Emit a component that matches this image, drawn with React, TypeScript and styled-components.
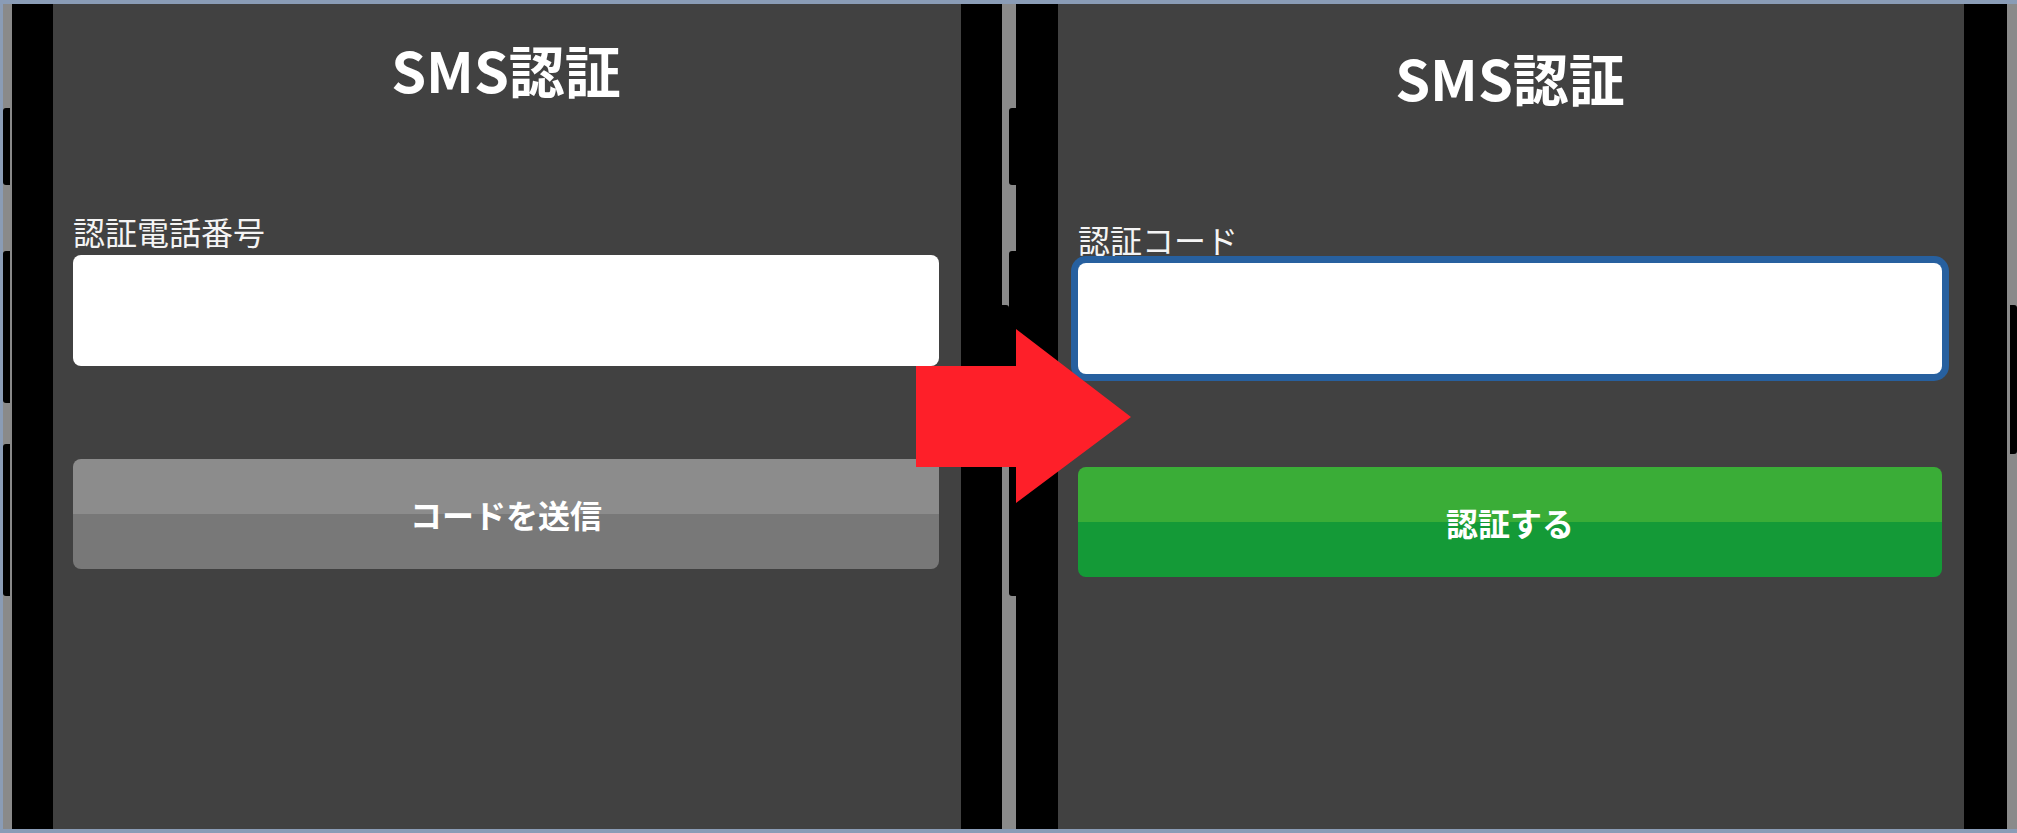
import React from 'react';
import styled, {createGlobalStyle} from 'styled-components';

const GlobalStyle = createGlobalStyle`
  html, body {
    margin: 0;
    padding: 0;
  }
  body {
    background: #8a9cb6;
    font-family: 'Noto Sans CJK JP', 'Noto Sans', sans-serif;
  }
`;

const Page = styled.div`
  position: relative;
  width: 2017px;
  height: 833px;
  box-sizing: border-box;
  padding: 4px 0 4px 3px;
  display: flex;
  background: #8a9cb6;
  overflow: hidden;
`;

const Phone = styled.div<{$width: number}>`
  position: relative;
  flex: none;
  width: ${(p) => p.$width}px;
  height: 100%;
  display: flex;
`;

const Edge = styled.div<{$width: number}>`
  flex: none;
  width: ${(p) => p.$width}px;
  background: #8a8a8a;
`;

const Bezel = styled.div<{$width: number}>`
  flex: none;
  width: ${(p) => p.$width}px;
  background: #000;
`;

const SideKey = styled.div<{$side: 'left' | 'right'; $top: number; $height: number}>`
  position: absolute;
  ${(p) => p.$side}: 0;
  top: ${(p) => p.$top}px;
  width: 7px;
  height: ${(p) => p.$height}px;
  background: #000;
  border-radius: ${(p) => (p.$side === 'left' ? '3px 0 0 3px' : '0 3px 3px 0')};
`;

const Screen = styled.section<{$shift: number}>`
  flex: 1;
  background: #414141;
  display: flex;
  flex-direction: column;
  padding: ${(p) => 37 + p.$shift}px 22px 0 20px;
`;

const Title = styled.h1`
  margin: 0;
  font-size: 56px;
  line-height: 56px;
  font-weight: 700;
  text-align: center;
  color: #fff;
`;

const Label = styled.label`
  display: block;
  margin: 118px 0 8px;
  font-size: 32px;
  line-height: 32px;
  font-weight: 400;
  color: #f4f4f4;
`;

const Input = styled.div<{$focused?: boolean}>`
  height: 111px;
  background: #fff;
  border-radius: 8px;
  box-shadow: ${(p) => (p.$focused ? '0 0 0 7px #27609f' : 'none')};
`;

const tones = {
  grey: ['#8c8c8c', '#787878'],
  green: ['#3aad37', '#149a37'],
};

const ActionButton = styled.button<{$tone: 'grey' | 'green'}>`
  margin-top: 93px;
  height: 110px;
  border: none;
  border-radius: 8px;
  background: linear-gradient(
    to bottom,
    ${(p) => tones[p.$tone][0]} 50%,
    ${(p) => tones[p.$tone][1]} 50%
  );
  color: #fff;
  font-family: inherit;
  font-size: 32px;
  font-weight: 700;
  padding: 0;
`;

const Arrow = styled.svg`
  position: absolute;
  left: 916px;
  top: 329px;
`;

export default function App() {
  return (
    <>
      <GlobalStyle />
      <Page>
        <Phone $width={1006}>
          <Edge $width={9} />
          <Bezel $width={41} />
          <Screen $shift={0}>
            <Title>SMS認証</Title>
            <Label>認証電話番号</Label>
            <Input />
            <ActionButton $tone="grey">コードを送信</ActionButton>
          </Screen>
          <Bezel $width={41} />
          <Edge $width={7} />
          <SideKey $side="left" $top={104} $height={77} />
          <SideKey $side="left" $top={247} $height={152} />
          <SideKey $side="left" $top={440} $height={152} />
          <SideKey $side="right" $top={301} $height={149} />
        </Phone>
        <Phone $width={1008}>
          <Edge $width={7} />
          <Bezel $width={42} />
          <Screen $shift={8}>
            <Title>SMS認証</Title>
            <Label>認証コード</Label>
            <Input $focused />
            <ActionButton $tone="green">認証する</ActionButton>
          </Screen>
          <Bezel $width={43} />
          <Edge $width={10} />
          <SideKey $side="left" $top={104} $height={77} />
          <SideKey $side="left" $top={247} $height={152} />
          <SideKey $side="left" $top={440} $height={152} />
          <SideKey $side="right" $top={301} $height={149} />
        </Phone>
        <Arrow width={215} height={174} viewBox="0 0 215 174">
          <polygon points="0,37 100,37 100,0 215,88 100,174 100,138 0,138" fill="#fe1f29" />
        </Arrow>
      </Page>
    </>
  );
}
